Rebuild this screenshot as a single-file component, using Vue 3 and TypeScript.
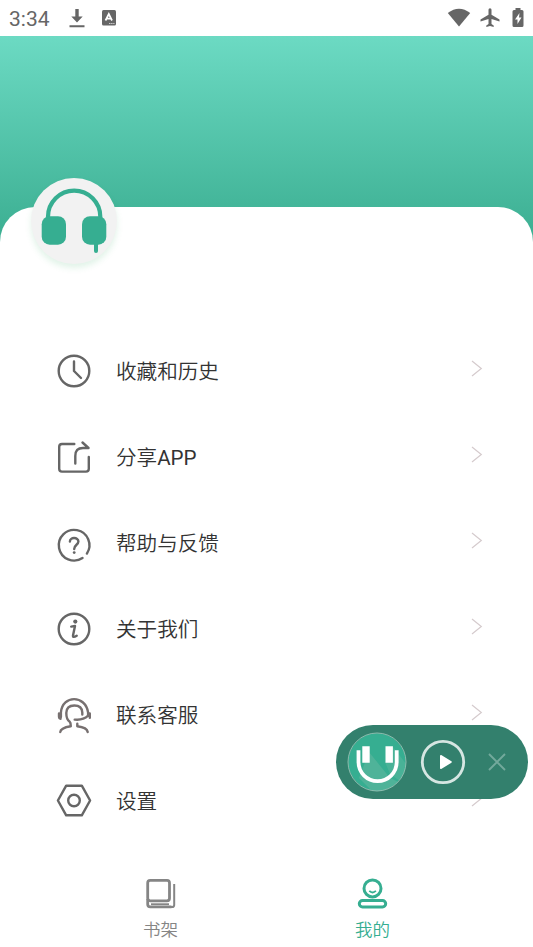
<script setup lang="ts">
interface MenuItem {
  icon: string
  label: string
  latin?: string
}

const items: MenuItem[] = [
  { icon: 'clock', label: '收藏和历史' },
  { icon: 'share', label: '分享', latin: 'APP' },
  { icon: 'help', label: '帮助与反馈' },
  { icon: 'info', label: '关于我们' },
  { icon: 'service', label: '联系客服' },
  { icon: 'settings', label: '设置' },
]
</script>

<template>
  <div class="screen">
    <header class="status">
      <span class="time">3:34</span>
      <svg class="download" width="18" height="22" viewBox="0 0 18 22">
        <path d="M7.300 2h3.400v7.500h4L9 15.500 3.300 9.500h4z M1.500 18.300h15v2h-15z" fill="#666" />
      </svg>
      <svg class="badge" width="14" height="16" viewBox="0 0 14 16">
        <rect width="14" height="15.500" rx="1.500" fill="#666" />
        <path d="M3.500 10.500 6.800 4l3.200 6.500M4.800 8.700h4" fill="none" stroke="#fff" stroke-width="1.700" />
        <path d="M7 13.500h5.500" stroke="#ccc" stroke-width="1" stroke-dasharray="1.500 .6" />
      </svg>
      <span class="spacer"></span>
      <svg class="wifi" width="24" height="20" viewBox="0 0 24 20">
        <path d="M.8 5Q12-3.600 23.200 5L12 18.500z" fill="#666" />
      </svg>
      <svg class="plane" width="20" height="20" viewBox="0 0 20 20">
        <path d="M19.500 13.500v-2L11.500 6.800V1.800a1.500 1.500 0 0 0-3 0v5L.5 11.500v2l8-2.500v5l-2.200 1.600v1.500L10 18l3.700 1.100v-1.500L11.500 16v-5z" fill="#666" />
      </svg>
      <svg class="battery" width="12" height="20" viewBox="0 0 12 20">
        <path d="M3.500 0h5v2H10q1.500 0 1.500 1.500v14Q11.500 19 10 19H2Q.5 19 .5 17.500v-14Q.5 2 2 2h1.500z" fill="#666" />
        <path d="M7.500 5 3 11.500h2.500V16L9.500 9.500H7z" fill="#fff" />
      </svg>
    </header>

    <div class="hero"></div>

    <main class="panel">
      <div class="avatar">
        <svg width="86" height="86" viewBox="0 0 86 86">
          <path d="M17 42v-3.300a26.150 26.150 0 0 1 52.300 0V42" fill="none" stroke="#36ae91" stroke-width="4.200" />
          <rect x="10.700" y="38.200" width="24.300" height="28.500" rx="8" fill="#36ae91" />
          <rect x="51" y="38.200" width="24.300" height="28.500" rx="8" fill="#36ae91" />
          <path d="M65 64v9" stroke="#36ae91" stroke-width="4" stroke-linecap="round" />
        </svg>
      </div>

      <ul class="menu">
        <li v-for="item in items" :key="item.icon" class="row">
          <svg class="icon" :class="item.icon" width="36" height="36" viewBox="0 0 36 36">
            <template v-if="item.icon === 'clock'">
              <circle cx="18" cy="18" r="15.300" />
              <path d="M18 8.500V18l7 7" />
            </template>
            <template v-else-if="item.icon === 'share'">
              <path d="M18.300 5H6Q3.200 5 3.200 7.800v22Q3.200 32.600 6 32.600h24q2.800 0 2.800-2.800V18" />
              <path d="M19.300 24.500V17Q19.300 9 27 9h5.500M26.500 3.500 32.500 9" />
            </template>
            <template v-else-if="item.icon === 'help'">
              <path d="M26.500 33A15.300 15.300 0 1 1 30.900 28.600" />
              <path d="M13.900 16.600c0-5 8.500-4.600 8.500 0 0 3.200-4.200 3.200-4.200 7.400" />
              <circle class="solid" cx="18.200" cy="27.600" r="1.400" />
            </template>
            <template v-else-if="item.icon === 'info'">
              <circle cx="18" cy="18" r="15.300" />
              <circle class="solid" cx="19.300" cy="10.600" r="2.100" />
              <path d="M15.200 15.600 19 15 17 24.500Q16.800 27.200 20.700 24.700" />
            </template>
            <template v-else-if="item.icon === 'service'">
              <path d="M4.700 21.700Q3 21.500 3 19.500V16.500M33.800 16.500V20.800M4.900 20V15.500C6.500-2.300 29.500-2.300 32.100 15.500V18.700Q27 23.500 18.700 22.600" />
              <path d="M26.300 17.500V15.500Q26 8.500 18.300 8.500Q10.500 8.500 10.300 16Q10.300 22.500 13.700 24.800Q14.800 25.700 14.800 29.300Q4.500 31 4.300 35M21.300 26.800V29.300Q31 30.500 31.700 35" />
            </template>
            <template v-else>
              <path d="M10.200 2.700H25.800L34.100 17.500 25.800 32.300H10.200L1.900 17.500z" />
              <circle cx="18" cy="17.500" r="5.800" />
            </template>
          </svg>
          <span class="label">{{ item.label }}<span v-if="item.latin" class="latin">{{ item.latin }}</span></span>
          <svg class="chevron" width="14" height="20" viewBox="0 0 14 20">
            <path d="M2 3 11.300 10.500 2 18" fill="none" stroke="#d5cbcd" stroke-width="1.200" />
          </svg>
        </li>
      </ul>
    </main>

    <nav class="tabs">
      <div class="tab">
        <svg width="34" height="34" viewBox="0 0 34 34" fill="none" stroke="#858585" stroke-width="2.800">
          <rect x="3.700" y="4.400" width="21.800" height="20.400" rx="2.500" />
          <path d="M3.700 23V28.300Q3.700 30.900 6.300 30.900H27.500" />
          <path d="M7 28.200H25" stroke-width="1.800" />
          <path d="M30.200 8V29Q30.200 31.100 28 31.100H26" stroke-width="2" />
        </svg>
        <span>书架</span>
      </div>
      <div class="tab active">
        <svg width="34" height="34" viewBox="0 0 34 34" fill="none" stroke="#36ae91" stroke-width="3">
          <circle cx="16.500" cy="12.400" r="8.500" />
          <path d="M13.300 14.900q3.200 3 6.600 0" stroke-width="1.900" />
          <rect x="3.300" y="24.600" width="26.400" height="6.400" rx="3.200" />
        </svg>
        <span>我的</span>
      </div>
    </nav>

    <aside class="player">
      <svg width="60" height="60" viewBox="0 0 60 60">
        <defs>
          <clipPath id="disc"><circle cx="30" cy="30" r="28.700" /></clipPath>
        </defs>
        <circle cx="30" cy="30" r="28.700" fill="#36ae91" />
        <g clip-path="url(#disc)">
          <path d="M22 20 43 46 60 54V60H26L12 46z" fill="#4fb399" />
          <path d="M46 15 60 33V54L43 42 38 30z" fill="#4fb399" opacity=".8" />
        </g>
        <circle cx="30" cy="30" r="29" fill="none" stroke="#a2c8bd" stroke-width=".8" />
        <path d="M11.500 18.300V30.100a19.100 19.100 0 0 0 38.200 0V18.300" fill="none" stroke="#fff" stroke-width="3.800" />
        <path d="M15.300 14.300h7.400v16.400h-7.400zM38.500 14.300h7.400v16.400h-7.400z" fill="#fff" />
      </svg>
      <svg class="play" width="46" height="46" viewBox="0 0 46 46">
        <circle cx="23" cy="23" r="20.700" fill="none" stroke="#d6e6e2" stroke-width="2.800" />
        <path d="M20.800 16.800v12.400L31 23z" fill="#fff" stroke="#fff" stroke-width="1.600" stroke-linejoin="round" />
      </svg>
      <svg class="close" width="20" height="20" viewBox="0 0 20 20">
        <path d="M2 2 18 18M18 2 2 18" stroke="#73a99c" stroke-width="1.900" />
      </svg>
    </aside>
  </div>
</template>

<style>
body {
  margin: 0;
}
</style>

<style scoped>
.screen {
  position: relative;
  display: flex;
  flex-direction: column;
  box-sizing: border-box;
  width: 533px;
  height: 947px;
  overflow: hidden;
  background: #fff;
  font-family: Roboto, "Noto Sans CJK SC", sans-serif;
  font-weight: 350;
}

svg {
  display: block;
  flex: none;
  overflow: visible;
}

.status {
  display: flex;
  align-items: center;
  box-sizing: border-box;
  height: 36px;
  padding: 0 9px;
}

.time {
  width: 59px;
  padding-top: 1px;
  color: #666;
  font: 400 21px/36px Roboto, sans-serif;
}

.badge {
  margin-left: 16px;
}

.spacer {
  flex: 1;
}

.plane {
  margin-left: 9px;
}

.battery {
  margin-left: 12px;
}

.hero {
  flex: none;
  height: 206px;
  background: linear-gradient(#6cdac3, #3bae91);
}

.panel {
  flex: none;
  height: 637px;
  margin-top: -35px;
  border-radius: 35px 35px 0 0;
  background: #fff;
}

.avatar {
  width: 86px;
  height: 86px;
  margin: -29px 0 0 31px;
  border-radius: 50%;
  background: #f2f2f2;
  box-shadow: 0 4px 6px rgba(54, 174, 100, 0.15);
}

.menu {
  margin: 64px 0 0;
  padding: 0;
  list-style: none;
}

.row {
  display: flex;
  align-items: center;
  height: 86px;
  padding: 0 49px 0 56px;
}

.icon {
  fill: none;
  stroke: #666;
  stroke-width: 2.400;
  stroke-linecap: round;
  stroke-linejoin: round;
}

.service {
  stroke: #777070;
}

.solid {
  fill: #666;
  stroke: none;
}

.label {
  flex: 1;
  margin: 1px 0 0 24px;
  color: #333;
  font-size: 20.600px;
  line-height: 30px;
}

.latin {
  font-weight: 400;
}

.chevron {
  margin-bottom: 6px;
}

.tabs {
  display: flex;
  flex: 1;
  padding: 32px 54px 0 55px;
}

.tab {
  display: flex;
  flex: 1;
  flex-direction: column;
  align-items: center;
  color: #858585;
  font-size: 17.500px;
  line-height: 26px;
}

.tab span {
  margin: 7px 1px 0 0;
}

.tab.active {
  color: #36ae91;
}

.player {
  position: absolute;
  top: 725px;
  right: 5px;
  display: flex;
  align-items: center;
  box-sizing: border-box;
  width: 192.500px;
  height: 74px;
  padding-left: 11px;
  border-radius: 37px;
  background: #33806d;
}

.play {
  margin-left: 13.500px;
}

.close {
  margin-left: 21px;
}
</style>
